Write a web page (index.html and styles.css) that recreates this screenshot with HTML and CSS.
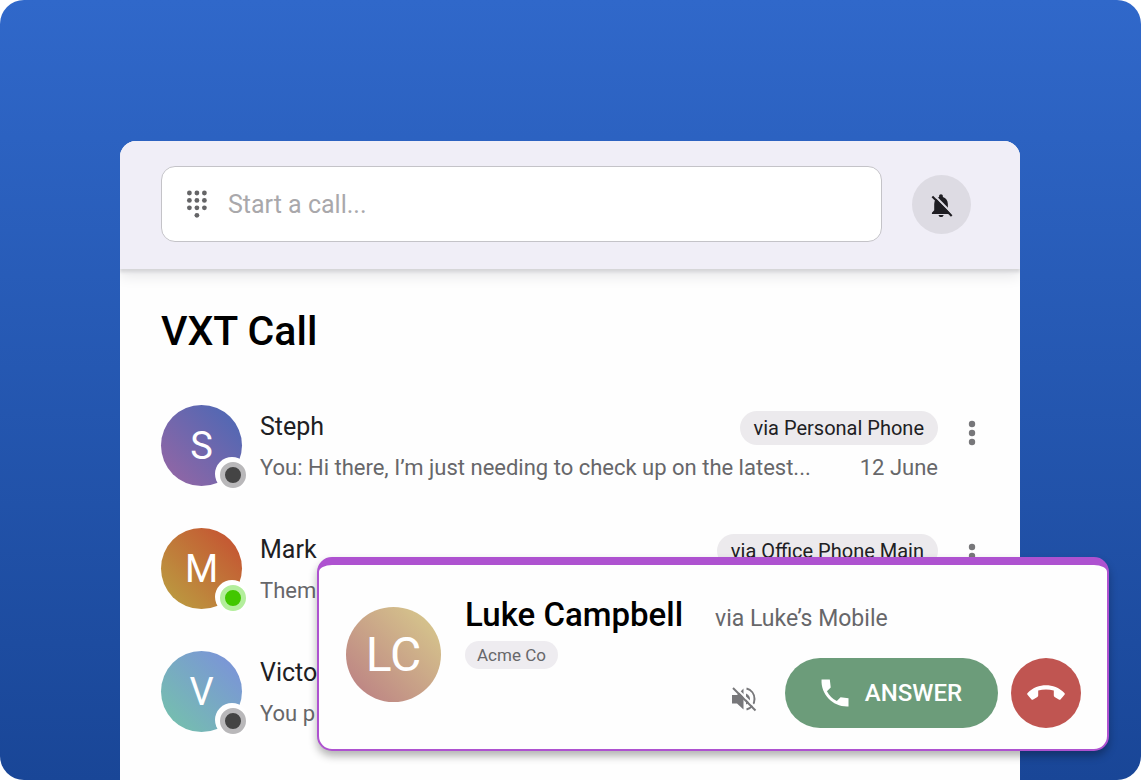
FILE: index.html
```
<!DOCTYPE html>
<html lang="en">

<head>
  <meta charset="utf-8">
  <meta name="viewport" content="width=device-width, initial-scale=1.0">
  <title>VXT Call</title>
  <link rel="stylesheet" href="styles.css">
</head>

<body>
  <div class="stage">
    <main class="app">
      <header class="topbar">
        <label class="search">
          <svg class="dialpad" viewBox="0 0 22 28" aria-hidden="true">
            <circle cx="3.4" cy="3" r="2.4" /><circle cx="10.9" cy="3" r="2.4" /><circle cx="18.4" cy="3" r="2.4" />
            <circle cx="3.4" cy="10.4" r="2.4" /><circle cx="10.9" cy="10.4" r="2.4" /><circle cx="18.4" cy="10.4" r="2.4" />
            <circle cx="3.4" cy="17.8" r="2.4" /><circle cx="10.9" cy="17.8" r="2.4" /><circle cx="18.4" cy="17.8" r="2.4" />
            <circle cx="10.9" cy="25.3" r="2.4" />
          </svg>
          <input type="text" placeholder="Start a call..." aria-label="Start a call">
        </label>
        <button class="bell" aria-label="Notifications off">
          <svg viewBox="0 0 24 24" aria-hidden="true">
            <path d="M2.800 21v-1.200l2.200-2.200v-6.200c0-3.300 1.900-5.700 4.700-6.500v-1c0-1 .8-1.700 1.800-1.700s1.800.7 1.800 1.700v1c2.900.8 4.800 3.200 4.800 6.500v6.200L21 21z" />
            <path d="M9.200 22h4.800c0 1.200-1 2-2.400 2s-2.400-.8-2.400-2z" />
            <path class="gap" d="M4.800 2.800L22.500 20.800" />
            <path class="slash" d="M3.200 4.300L21.800 23" />
          </svg>
        </button>
      </header>

      <section class="calls">
        <h1>VXT Call</h1>
        <ul class="list">
          <li class="row">
            <div class="avatar steph">S<i class="status away"></i></div>
            <div class="info">
              <div class="line">
                <span class="name">Steph</span>
                <span class="chip">via Personal Phone</span>
              </div>
              <div class="line">
                <span class="msg">You: Hi there, I’m just needing to check up on the latest...</span>
                <span class="date">12 June</span>
              </div>
            </div>
            <button class="more" aria-label="More options">
              <svg viewBox="0 0 8 26" aria-hidden="true">
                <circle cx="4" cy="4" r="3.2" /><circle cx="4" cy="13" r="3.2" /><circle cx="4" cy="22" r="3.2" />
              </svg>
            </button>
          </li>
          <li class="row">
            <div class="avatar mark">M<i class="status online"></i></div>
            <div class="info">
              <div class="line">
                <span class="name">Mark</span>
                <span class="chip">via Office Phone Main</span>
              </div>
              <div class="line">
                <span class="msg">Them</span>
              </div>
            </div>
            <button class="more" aria-label="More options">
              <svg viewBox="0 0 8 26" aria-hidden="true">
                <circle cx="4" cy="4" r="3.2" /><circle cx="4" cy="13" r="3.2" /><circle cx="4" cy="22" r="3.2" />
              </svg>
            </button>
          </li>
          <li class="row">
            <div class="avatar victo">V<i class="status away"></i></div>
            <div class="info">
              <div class="line">
                <span class="name">Victo</span>
              </div>
              <div class="line">
                <span class="msg">You p</span>
              </div>
            </div>
          </li>
        </ul>
      </section>
    </main>

    <!-- incoming call -->
    <aside class="incoming">
      <div class="avatar large luke">LC</div>
      <div class="caller">
        <h2>Luke Campbell</h2>
        <span class="company">Acme Co</span>
      </div>
      <div class="side">
        <span class="via">via Luke’s Mobile</span>
        <div class="actions">
          <button class="mute" aria-label="Mute ringtone">
            <svg viewBox="0 0 26 26" aria-hidden="true">
              <path d="M1 9h5l6.500-6.500v21L6 17.500H1z" />
              <path class="wave" d="M15.500 2.500c4.700 1.200 8 5.400 8 10.500s-3.300 9.300-8 10.500" />
              <path d="M15 7.500c2.400 1 4 3.100 4 5.500s-1.600 4.500-4 5.500z" />
              <path class="gap" d="M4 1L25.500 22.500" />
              <path class="slash" d="M2 2L24.500 24.500" />
            </svg>
          </button>
          <button class="answer">
            <svg viewBox="0 0 24 24" aria-hidden="true">
              <path d="M21 15.460l-5.270-.61-2.520 2.520c-2.830-1.440-5.150-3.750-6.590-6.590l2.530-2.530L8.540 3H3.030C2.450 13.180 10.820 21.550 21 20.970v-5.510z" />
            </svg>
            ANSWER
          </button>
          <button class="decline" aria-label="Decline">
            <svg viewBox="0 0 38 16" aria-hidden="true">
              <path d="M.6 8C6 2.500 12.500.3 19 .3S32 2.500 37.400 8c.6.600.6 1.200.1 1.800l-3.800 4.400c-.6.600-1.200.700-1.900.300l-4.200-2.600c-.5-.3-.8-.8-.8-1.400V5.600c-5-1.500-10.600-1.500-15.600 0v4.900c0 .6-.3 1.100-.8 1.400l-4.200 2.600c-.7.400-1.300.3-1.900-.3L.5 9.800C0 9.200 0 8.600.6 8z" />
            </svg>
          </button>
        </div>
      </div>
    </aside>
  </div>
</body>

</html>
```

FILE: styles.css
```
* {
  box-sizing: border-box;
}

html,
body {
  margin: 0;
  background-color: #fff;
  font-family: Roboto, "Liberation Sans", sans-serif;
}

button {
  display: flex;
  align-items: center;
  justify-content: center;
  border: none;
  padding: 0;
  background-color: transparent;
  font-family: inherit;
}

svg {
  display: block;
  fill: currentColor;
}

.gap,
.slash,
.wave {
  fill: none;
  stroke: currentColor;
  stroke-width: 2;
}

.stage {
  position: relative;
  display: flex;
  height: 100vh;
  padding: 141px 121px 0 120px;
  overflow: hidden;
  border-radius: 24px;
  background: linear-gradient(#3068ca, #194697);
}

.app {
  flex: 1;
  overflow: hidden;
  border-radius: 16px 16px 0 0;
  background-color: #fefefe;
}

.topbar {
  display: flex;
  align-items: center;
  gap: 30px;
  height: 128px;
  padding: 0 49px 2px 41px;
  background-color: #f0eef7;
  box-shadow: 0 3px 3px #d6d6d8, 0 6px 14px #e4e4e6;
}

.search {
  flex: 1;
  display: flex;
  align-items: center;
  gap: 20px;
  height: 76px;
  padding: 0 24px;
  border: 1px solid #c4c3c8;
  border-radius: 14px;
  background-color: #fff;
}

.search input {
  flex: 1;
  min-width: 0;
  border: none;
  outline: none;
  padding: 0;
  background-color: transparent;
  font-family: inherit;
  font-size: 25px;
}

.search input::placeholder {
  color: #a9a8ab;
}

.dialpad {
  width: 22px;
  height: 28px;
  color: #656567;
}

.bell {
  width: 59px;
  height: 59px;
  border-radius: 50%;
  background-color: #dddbe3;
  color: #1e1d22;
}

.bell svg {
  width: 25px;
  height: 25px;
}

.bell .gap {
  stroke: #dddbe3;
}

.calls {
  padding: 38px 31px 0 41px;
}

h1 {
  margin: 0 0 50px;
  font-size: 41px;
  line-height: 48px;
  font-weight: 500;
  color: #000;
}

.list {
  display: flex;
  flex-direction: column;
  gap: 40px;
  margin: 0;
  padding: 0;
  list-style: none;
}

.row {
  display: flex;
  align-items: flex-start;
}

.avatar {
  position: relative;
  flex: none;
  display: flex;
  align-items: center;
  justify-content: center;
  width: 81px;
  height: 81px;
  border-radius: 50%;
  color: #fff;
  font-size: 38px;
}

.steph {
  background: linear-gradient(45deg, #9166a5 10%, #5068b4 90%);
}

.mark {
  background: linear-gradient(45deg, #bb9a40 10%, #c55532 90%);
}

.victo {
  background: linear-gradient(45deg, #75bfae 10%, #7b94d8 90%);
}

.luke {
  background: linear-gradient(45deg, #bd8484 10%, #d6c58c 90%);
}

.large {
  width: 95px;
  height: 95px;
  font-size: 48px;
}

.status {
  position: absolute;
  right: -4px;
  bottom: -2px;
  width: 26px;
  height: 26px;
  border: 5px solid;
  border-radius: 50%;
  box-shadow: -1px -1px 0 4px #fff;
}

.away {
  border-color: #b9b8ba;
  background-color: #444;
}

.online {
  border-color: #b3ee9c;
  background-color: #42c700;
}

.info {
  flex: 1;
  min-width: 0;
  padding-top: 1px;
  margin-left: 18px;
}

.line {
  display: flex;
  align-items: center;
  justify-content: space-between;
  height: 41px;
  white-space: nowrap;
}

.name {
  font-size: 25px;
  color: #202023;
}

.msg,
.date {
  font-size: 22px;
  color: #67676a;
}

.chip {
  margin-top: 3px;
  padding: 0 14px;
  border-radius: 17px;
  background-color: #eceaed;
  color: #202023;
  font-size: 20px;
  line-height: 34px;
}

.more {
  width: 36px;
  height: 56px;
  margin-left: 16px;
  margin-right: -1px;
  color: #77777a;
}

.more svg {
  width: 8px;
  height: 26px;
}

/* incoming call */
.incoming {
  position: absolute;
  left: 317px;
  right: 32px;
  bottom: 29px;
  display: flex;
  align-items: flex-start;
  height: 194px;
  padding: 0 26px 0 27px;
  border: 2px solid #ae52d0;
  border-top-width: 8px;
  border-radius: 15px;
  background-color: #fefefe;
  box-shadow: 0 5px 8px rgba(0, 0, 0, 0.3);
}

.incoming .avatar {
  margin-top: 42px;
}

.caller {
  flex: none;
  width: 250px;
  margin-left: 24px;
  padding-top: 30px;
}

h2 {
  margin: 0 0 6px;
  font-size: 33px;
  line-height: 40px;
  font-weight: 500;
  color: #000;
}

.company {
  display: inline-block;
  padding: 0 12px;
  border-radius: 14px;
  background-color: #eeecf0;
  color: #67676a;
  font-size: 17px;
  line-height: 28px;
}

.side {
  flex: 1;
  padding-top: 34px;
}

.via {
  display: block;
  color: #67676a;
  font-size: 23px;
  line-height: 40px;
}

.actions {
  display: flex;
  align-items: center;
  justify-content: flex-end;
  gap: 13px;
  margin-top: 19px;
}

.mute {
  margin: 12px 15px 0 0;
  color: #77777a;
}

.mute svg {
  width: 26px;
  height: 26px;
}

.mute .gap {
  stroke: #fefefe;
}

.answer {
  gap: 12px;
  width: 213px;
  height: 70px;
  padding-right: 4px;
  border-radius: 35px;
  background-color: #6c9c7a;
  color: #fff;
  font-size: 24px;
  font-weight: 500;
}

.answer svg {
  width: 36px;
  height: 36px;
}

.decline {
  width: 70px;
  height: 70px;
  border-radius: 50%;
  background-color: #c05551;
  color: #fff;
}

.decline svg {
  width: 38px;
  height: 16px;
}
```
